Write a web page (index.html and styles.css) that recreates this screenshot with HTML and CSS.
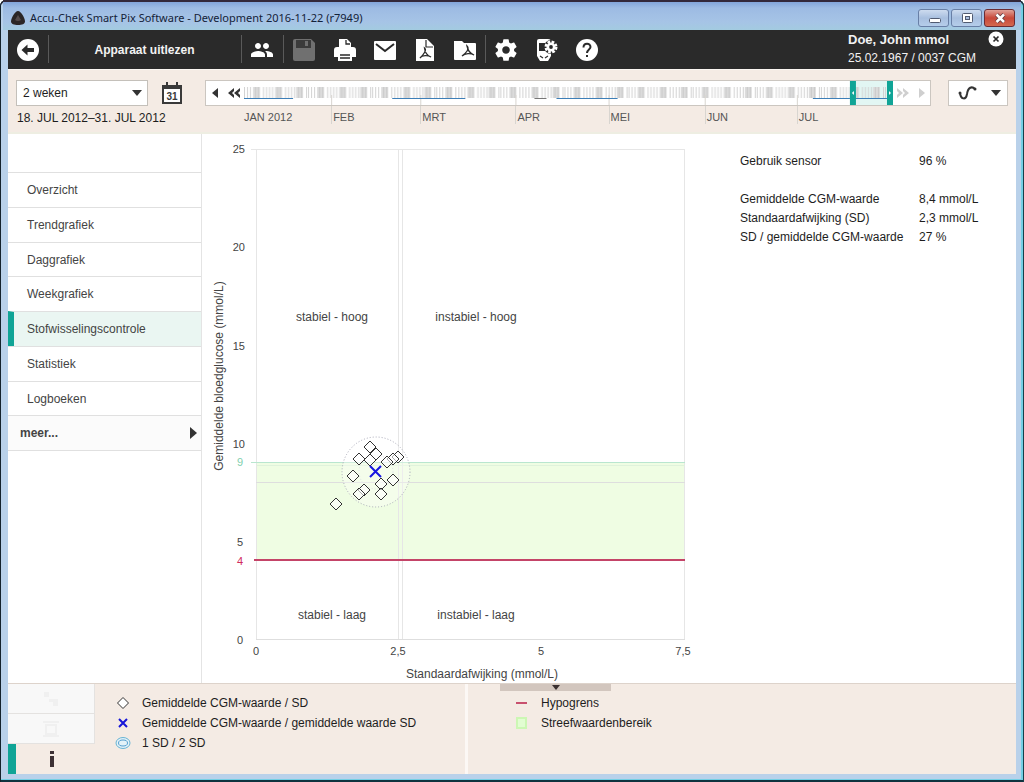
FILE: index.html
```html
<!DOCTYPE html>
<html lang="nl">
<head>
<meta charset="utf-8">
<meta name="viewport" content="width=device-width, initial-scale=1">
<title>Accu-Chek Smart Pix Software</title>
<link rel="stylesheet" href="styles.css">
</head>
<body>
<div class="window">
  <header class="titlebar">
    <svg class="app-icon" width="16" height="16" viewBox="0 0 16 16" aria-hidden="true"><path d="M8 1C11 1 15 8 15 11.500C15 14 12 15 8 15C4 15 1 14 1 11.500C1 8 5 1 8 1Z" fill="#2b2626"/><path d="M8 5L11 10Q8 12 5 10Z" fill="#554c4c"/></svg>
    <span class="title">Accu-Chek Smart Pix Software - Development 2016-11-22 (r7949)</span>
    <div class="window-buttons">
      <button class="win-btn" aria-label="Minimaliseren"><svg width="28" height="16" viewBox="0 0 28 16"><rect x="9.500" y="8.500" width="11" height="4" rx="1" fill="#fff" stroke="#505a70"/></svg></button>
      <button class="win-btn" aria-label="Maximaliseren"><svg width="28" height="16" viewBox="0 0 28 16"><rect x="9.500" y="3.500" width="10" height="9" rx="1" fill="#fff" stroke="#505a70"/><rect x="12.500" y="6.500" width="4" height="3" fill="#a9bddd" stroke="#505a70"/></svg></button>
      <button class="win-btn win-close" aria-label="Sluiten"><svg width="28" height="16" viewBox="0 0 28 16"><path d="M10.500 4.500L18 12M18 4.500L10.500 12" stroke="#5b3a40" stroke-width="4"/><path d="M10.500 4.500L18 12M18 4.500L10.500 12" stroke="#fff" stroke-width="2.500"/></svg></button>
    </div>
  </header>

  <nav class="toolbar" aria-label="Werkbalk">
    <button class="tool" aria-label="Terug"><svg width="24" height="24" viewBox="0 0 24 24"><circle cx="12" cy="12" r="11" fill="#fff"/><path d="M5.500 12L11.500 6.500V10H18V14H11.500V17.500Z" fill="#2a2a2a"/></svg></button>
    <button class="read-device">Apparaat uitlezen</button>
    <button class="tool sep-left" aria-label="Patiënten"><svg width="24" height="24" viewBox="0 0 24 24" fill="#fff"><path d="M16 11c1.660 0 2.990-1.340 2.990-3S17.660 5 16 5c-1.660 0-3 1.340-3 3s1.340 3 3 3zm-8 0c1.660 0 2.990-1.340 2.990-3S9.660 5 8 5C6.340 5 5 6.340 5 8s1.340 3 3 3zm0 2c-2.330 0-7 1.170-7 3.500V19h14v-2.500c0-2.330-4.670-3.500-7-3.500zm8 0c-.290 0-.620.020-.970.050 1.160.840 1.970 1.970 1.970 3.450V19h6v-2.500c0-2.330-4.670-3.500-7-3.500z"/></svg></button>
    <button class="tool sep-left" aria-label="Opslaan"><svg width="24" height="24" viewBox="0 0 24 24"><path d="M3 1H19L23 5V21Q23 23 21 23H3Q1 23 1 21V3Q1 1 3 1Z" fill="#707070"/><path d="M4 2H19V10H4Z" fill="#3b3b3b"/><path d="M13 3H16V8H13Z" fill="#707070"/></svg></button>
    <button class="tool" aria-label="Afdrukken"><svg width="24" height="24" viewBox="0 0 24 24"><path d="M6 1H14L18 5V9H20Q23 9 23 12V19H19V23H5V19H1V12Q1 9 4 9H6Z" fill="#fff"/><path d="M13 2V6H17M7 17H17M7 20H17" fill="none" stroke="#2a2a2a" stroke-width="1.300"/></svg></button>
    <button class="tool" aria-label="E-mail"><svg width="24" height="24" viewBox="0 0 24 24"><rect x="1" y="3" width="22" height="19" rx="1" fill="#fff"/><path d="M3 6L12 13L21 6" fill="none" stroke="#2a2a2a" stroke-width="2"/></svg></button>
    <button class="tool" aria-label="PDF"><svg width="24" height="24" viewBox="0 0 24 24"><path d="M3 1H14L21 8V23H3Z" fill="#fff"/><path d="M13 2V9H20" fill="none" stroke="#2a2a2a" stroke-width="1.200"/><path d="M11.500 10C14 12 11 16 7 20C9 17 15 17 18 19C15 18 12 15 11.500 10Z" fill="none" stroke="#2a2a2a" stroke-width="1.300"/></svg></button>
    <button class="tool" aria-label="PDF-map"><svg width="24" height="24" viewBox="0 0 24 24"><path d="M1 3H9L11 5H22Q23 5 23 6V21Q23 22 22 22H2Q1 22 1 21Z" fill="#fff"/><path d="M14 8C17 11 13 15 9 18C12 15 18 15 21 17C18 16 15 13 14 8Z" fill="none" stroke="#2a2a2a" stroke-width="1.300"/></svg></button>
    <button class="tool sep-left" aria-label="Instellingen"><svg width="26" height="26" viewBox="0 0 24 24" fill="#fff"><path d="M19.430 12.980c.040-.320.070-.640.070-.980s-.030-.660-.070-.980l2.110-1.650c.190-.150.240-.420.120-.640l-2-3.460c-.120-.220-.390-.300-.610-.220l-2.490 1c-.520-.400-1.080-.730-1.690-.980l-.380-2.650C14.460 2.180 14.250 2 14 2h-4c-.250 0-.460.180-.490.420l-.380 2.650c-.610.250-1.170.590-1.690.980l-2.490-1c-.230-.090-.490 0-.610.220l-2 3.460c-.130.220-.070.490.120.640l2.110 1.650c-.040.320-.070.650-.070.980s.030.660.070.980l-2.110 1.650c-.190.150-.240.420-.120.640l2 3.460c.120.220.390.300.610.220l2.490-1c.520.400 1.080.730 1.690.980l.380 2.650c.030.240.240.420.490.420h4c.250 0 .460-.180.490-.420l.380-2.650c.610-.250 1.170-.590 1.690-.980l2.490 1c.230.090.490 0 .610-.220l2-3.460c.120-.220.070-.490-.120-.640l-2.110-1.650zM12 15.500c-1.930 0-3.500-1.570-3.500-3.500s1.570-3.500 3.500-3.500 3.500 1.570 3.500 3.500-1.570 3.500-3.500 3.500z"/></svg></button>
    <button class="tool" aria-label="Apparaatinstellingen"><svg width="24" height="24" viewBox="0 0 24 24"><path d="M4 1H13Q16 1 16 4V18L13 23H5L2 18V3Q2 1 4 1Z" fill="#fff"/><path d="M4 5H14V13H4Z" fill="#2a2a2a"/><path d="M5 18L8 20M13 18L10 20" stroke="#2a2a2a" stroke-width="1.200"/><circle cx="16" cy="9" r="7" fill="#2a2a2a"/><circle cx="16" cy="9" r="4.500" fill="#fff"/><circle cx="16" cy="9" r="5.300" fill="none" stroke="#fff" stroke-width="2.400" stroke-dasharray="2.700 1.460"/><circle cx="16" cy="9" r="1.900" fill="#2a2a2a"/></svg></button>
    <button class="tool" aria-label="Help"><svg width="24" height="24" viewBox="0 0 24 24"><circle cx="12" cy="12" r="11" fill="#fff"/><path d="M8.500 9.500C8.500 4.500 15.500 4.500 15.500 9C15.500 11.500 12 11.500 12 15" fill="none" stroke="#2a2a2a" stroke-width="2"/><rect x="11" y="17" width="2" height="2" fill="#2a2a2a"/></svg></button>
    <div class="patient">
      <strong>Doe, John mmol</strong>
      <span>25.02.1967 / 0037 CGM</span>
    </div>
    <button class="patient-close" aria-label="Patiënt sluiten"><svg width="16" height="16" viewBox="0 0 16 16"><circle cx="8" cy="8" r="7.500" fill="#fff"/><path d="M5.500 5.500L10.500 10.500M10.500 5.500L5.500 10.500" stroke="#2a2a2a" stroke-width="1.700"/></svg></button>
  </nav>

  <section class="period">
    <div class="range">
      <div class="range-row">
        <div class="select-wrap">
          <select class="range-select" aria-label="Periode"><option>2 weken</option></select>
          <svg class="select-arrow" width="10" height="6" viewBox="0 0 10 6"><path d="M0 0H10L5 6Z" fill="#333"/></svg>
        </div>
        <button class="calendar" aria-label="Kalender"><svg width="20" height="22" viewBox="0 0 20 22"><path d="M1 4H19V21H1Z" fill="#fff" stroke="#3a3a3a" stroke-width="2"/><path d="M1 6H19M5 0V5M15 0V5" stroke="#3a3a3a" stroke-width="2"/><text x="10" y="18" class="cal-num">31</text></svg></button>
      </div>
      <span class="range-dates">18. JUL 2012–31. JUL 2012</span>
    </div>
    <div class="timeline">
      <div class="track">
        <button class="step" aria-label="Vorige"><svg width="6" height="10" viewBox="0 0 6 10"><path d="M6 0V10L0 5Z" fill="#333"/></svg></button>
        <button class="step" aria-label="Snel terug"><svg width="12" height="10" viewBox="0 0 12 10"><path d="M6 0L0 5L6 10V7L4 5L6 3ZM12 0L6 5L12 10V7L10 5L12 3Z" fill="#333"/></svg></button>
        <svg class="days" viewBox="0 0 649 26" preserveAspectRatio="none" aria-hidden="true">
          <defs>
            <pattern id="weeks" width="64" height="26" patternUnits="userSpaceOnUse">
              <path d="M1.500 7V18M4.500 7V18M7.500 7V18M20.500 7V18M23.500 7V18M26.500 7V18M29.500 7V18M42.500 7V18M45.500 7V18M48.500 7V18M51.500 7V18M63.500 7V18" stroke="#d2d2d2"/>
              <path d="M10 7H17V18H10ZM32 7H39V18H32ZM53 7H60V18H53Z" fill="#dcdcdc"/>
              <path d="M12.500 7V18M15.500 7V18M34.500 7V18M37.500 7V18M55.500 7V18M58.500 7V18" stroke="#cacaca"/>
            </pattern>
          </defs>
          <rect width="606" height="26" fill="url(#weeks)"/>
          <path d="M88.500 15V26M177.500 15V26M272.500 15V26M365.500 15V26M461.500 15V26M553.500 15V26" stroke="#d8d5d0"/>
          <path d="M1 18.500H50M149 18.500H222M313 18.500H374M569 18.500H606" stroke="#3d7fb8"/>
          <path d="M291 18.500H303" stroke="#777"/>
          <rect x="611" y="0" width="32" height="26" fill="#e2f6f3"/>
          <rect x="611" y="0" width="32" height="26" fill="url(#weeks)"/>
          <path d="M611 18.500H643" stroke="#3d7fb8"/>
          <path d="M606 0.500H649M606 25.500H649" stroke="#10a496"/>
          <path d="M606 0H612V26H606ZM643 0H649V26H643Z" fill="#10a496"/>
          <path d="M610 11V15L608 13ZM645 11V15L647 13Z" fill="#fff"/>
        </svg>
        <button class="step" aria-label="Snel vooruit"><svg width="12" height="10" viewBox="0 0 12 10"><path d="M0 0L6 5L0 10V7L2 5L0 3ZM6 0L12 5L6 10V7L8 5L6 3Z" fill="#cfcfcf"/></svg></button>
        <button class="step" aria-label="Volgende"><svg width="6" height="10" viewBox="0 0 6 10"><path d="M0 0V10L6 5Z" fill="#cfcfcf"/></svg></button>
      </div>
      <div class="months"><span>JAN 2012</span><span>FEB</span><span>MRT</span><span>APR</span><span>MEI</span><span>JUN</span><span>JUL</span></div>
    </div>
    <button class="curve" aria-label="Curvetype"><svg width="20" height="16" viewBox="0 0 20 16"><path d="M2 8C3 15 8 15 9 9C10 2 14 1 17 4" fill="none" stroke="#333" stroke-width="2"/><circle cx="2" cy="8" r="1.500" fill="#333"/><circle cx="17" cy="4" r="1.500" fill="#333"/></svg><svg width="10" height="6" viewBox="0 0 10 6"><path d="M0 0H10L5 6Z" fill="#333"/></svg></button>
  </section>

  <main class="content">
    <nav class="sidebar" aria-label="Rapporten">
      <a class="item" href="#">Overzicht</a>
      <a class="item" href="#">Trendgrafiek</a>
      <a class="item" href="#">Daggrafiek</a>
      <a class="item" href="#">Weekgrafiek</a>
      <a class="item active" href="#" aria-current="page">Stofwisselingscontrole</a>
      <a class="item" href="#">Statistiek</a>
      <a class="item" href="#">Logboeken</a>
      <a class="item more" href="#">meer...<svg width="7" height="12" viewBox="0 0 7 12"><path d="M0 0V12L7 6Z" fill="#333"/></svg></a>
    </nav>

    <div class="chart">
      <svg viewBox="0 0 500 549" role="img" aria-label="Stofwisselingscontrole">
        <defs><path id="pt" d="M0 -6L6 0L0 6L-6 0Z" fill="#fff" fill-opacity="0.600" stroke="#333"/></defs>
        <rect x="54" y="328" width="429" height="98" fill="#effde3"/>
        <path d="M49 15.500H483M54.500 15V506M482.500 15V506M196.500 15V506M200.500 15V506" class="grid"/>
        <path d="M54 348.500H483M54 505.500H483" stroke="#dedede"/>
        <path d="M49 328.500H483" stroke="#b9e6cf"/>
        <path d="M54 331.500H483" stroke="#e0f2dc"/>
        <path d="M52 426H483" stroke="#c44468" stroke-width="2"/>
        <ellipse cx="174" cy="338" rx="34" ry="35" fill="#fff" fill-opacity="0.300" stroke="#a9a9b8" stroke-dasharray="1 2"/>
        <ellipse cx="174" cy="338" rx="17" ry="17" fill="none" stroke="#dde2e6" stroke-dasharray="1 2"/>
        <use href="#pt" x="168" y="326"/><use href="#pt" x="174" y="320"/><use href="#pt" x="168" y="313"/><use href="#pt" x="157" y="325"/>
        <use href="#pt" x="196" y="323"/><use href="#pt" x="191" y="325"/><use href="#pt" x="185" y="328"/>
        <use href="#pt" x="151" y="342"/><use href="#pt" x="191" y="346"/><use href="#pt" x="179" y="350"/><use href="#pt" x="179" y="360"/>
        <use href="#pt" x="162" y="356"/><use href="#pt" x="157" y="360"/><use href="#pt" x="134" y="370"/>
        <path d="M168 332L179 343M179 332L168 343" stroke="#1616e0" stroke-width="2"/>
        <g class="ticks-y"><text x="43" y="19">25</text><text x="43" y="117">20</text><text x="43" y="216">15</text><text x="43" y="314">10</text><text x="41" y="412">5</text><text x="41" y="510">0</text><text x="41" y="332" class="high">9</text><text x="41" y="431" class="low">4</text></g>
        <g class="mid ticks-x"><text x="54" y="521">0</text><text x="196" y="521">2,5</text><text x="339" y="521">5</text><text x="481" y="521">7,5</text></g>
        <g class="mid zone"><text x="130" y="187">stabiel - hoog</text><text x="274" y="187">instabiel - hoog</text><text x="130" y="485">stabiel - laag</text><text x="274" y="485">instabiel - laag</text><text x="280" y="544">Standaardafwijking (mmol/L)</text><text transform="translate(21 242) rotate(-90)">Gemiddelde bloedglucose (mmol/L)</text></g>
      </svg>
    </div>

    <dl class="stats">
      <dt>Gebruik sensor</dt><dd>96 %</dd>
      <dt class="gap">Gemiddelde CGM-waarde</dt><dd class="gap">8,4 mmol/L</dd>
      <dt>Standaardafwijking (SD)</dt><dd>2,3 mmol/L</dd>
      <dt>SD / gemiddelde CGM-waarde</dt><dd>27 %</dd>
    </dl>
  </main>

  <footer class="legend">
    <div class="legend-tabs">
      <button class="tab" disabled aria-label="Curve"><svg width="20" height="20" viewBox="0 0 20 20"><path d="M3 3H8V8H3ZM8 10H17V13H8ZM12 13H17V17H12Z" fill="#f0f0f0"/></svg></button>
      <button class="tab" disabled aria-label="Tabel"><svg width="20" height="20" viewBox="0 0 20 20"><path d="M2 3H18M2 17H18M5 6H15V15H5Z" fill="none" stroke="#f0f0f0" stroke-width="2"/></svg></button>
      <button class="tab info" aria-label="Informatie"><svg width="6" height="16" viewBox="0 0 6 16"><path d="M1 0H5V3H1ZM1 5H5V16H1Z" fill="#3c3034"/></svg></button>
    </div>
    <ul class="legend-list">
      <li><svg width="16" height="14" viewBox="0 0 16 14"><path d="M8 1.500L13.500 7L8 12.500L2.500 7Z" fill="#fff" stroke="#333"/></svg>Gemiddelde CGM-waarde / SD</li>
      <li><svg width="16" height="14" viewBox="0 0 16 14"><path d="M4 3L12 11M12 3L4 11" stroke="#1616d8" stroke-width="2"/></svg>Gemiddelde CGM-waarde / gemiddelde waarde SD</li>
      <li><svg width="16" height="14" viewBox="0 0 16 14"><ellipse cx="8" cy="7" rx="7" ry="5.500" fill="#e3f2f8" stroke="#69b4d4"/><ellipse cx="8" cy="7" rx="4.500" ry="3" fill="#e3f2f8" stroke="#549fd0"/></svg>1 SD / 2 SD</li>
    </ul>
    <div class="legend-right">
      <button class="collapse" aria-label="Legenda inklappen"><svg width="8" height="5" viewBox="0 0 8 5"><path d="M0 0H8L4 5Z" fill="#3a3030"/></svg></button>
      <ul class="legend-list">
        <li><svg width="16" height="14" viewBox="0 0 16 14"><path d="M2 7H13" stroke="#c8506e" stroke-width="2"/></svg>Hypogrens</li>
        <li><svg width="16" height="14" viewBox="0 0 16 14"><rect x="2" y="1" width="11" height="12" fill="#ccf7b4"/><rect x="4" y="3" width="7" height="8" fill="#e2fdd2"/></svg>Streefwaardenbereik</li>
      </ul>
    </div>
  </footer>
</div>
</body>
</html>
```
FILE: styles.css
```css
* { box-sizing: border-box; }

body {
  margin: 0;
  font: 12px/16px "Liberation Sans", Arial, sans-serif;
  color: #2c2c2c;
}

button {
  margin: 0;
  padding: 0;
  border: 0;
  background: none;
  color: inherit;
  font: inherit;
  display: flex;
  align-items: center;
  justify-content: center;
}

.window {
  min-height: 100vh;
  display: flex;
  flex-direction: column;
  padding: 0 8px 8px;
  border-radius: 6px 6px 0 0;
  background: #b9d1ea;
  box-shadow: inset 1px 0 #14222c, inset -1px 0 #14404a, inset 0 2px #33283a, inset 0 -2px #10333f, inset -3px 0 #74cfe4, inset 0 -3px #74cfe4;
}

/* Title bar */
.titlebar {
  height: 30px;
  margin: 0 -5px;
  padding: 6px 5px 0;
  display: flex;
  align-items: center;
  background: linear-gradient(#33283a 2px, #83a5da 2px, #9dbbe3 8px, #a6c4e6 22px, #a3cbe0 30px);
}
.app-icon { margin: 0 4px 0 2px; }
.title {
  flex: 1;
  font: 11px/16px "Noto Sans", "Open Sans", sans-serif;
  color: #142238;
  white-space: nowrap;
}
.window-buttons { display: flex; gap: 2px; padding-right: 1px; }
.win-btn {
  width: 31px;
  height: 18px;
  border: 1px solid #687fa6;
  border-radius: 3px;
  background: linear-gradient(#cddbef, #a8bfdf 50%, #b5cdea);
}
.win-close {
  border-color: #6b2c34;
  background: linear-gradient(#e0a198, #c8483a 50%, #d4694f);
}

/* Toolbar */
.toolbar {
  height: 39px;
  display: flex;
  background: #2a2a2a;
  color: #f2f2f2;
}
.tool { width: 40px; height: 39px; }
.sep-left { width: 42px; position: relative; }
.sep-left::before, .read-device::before {
  content: "";
  position: absolute;
  left: 0;
  top: 5px;
  bottom: 6px;
  width: 1px;
  background: #5a5a5a;
}
.read-device { position: relative; width: 193px; font-weight: bold; }
.patient {
  margin-left: auto;
  width: 140px;
  padding-top: 1px;
  display: flex;
  flex-direction: column;
  line-height: 18px;
  white-space: nowrap;
}
.patient strong { font-size: 13px; }
.patient-close { align-self: flex-start; margin: 1px 12px 0 0; }

/* Period selection */
.period {
  height: 65px;
  padding: 10px 8px 0;
  display: flex;
  background: #f4ebe4;
  border-top: 1px solid #fbf6f2;
  border-bottom: 2px solid #eeeee2;
}
.range { width: 189px; }
.range-row { display: flex; align-items: center; gap: 14px; }
.select-wrap { position: relative; }
.range-select {
  display: block;
  appearance: none;
  width: 132px;
  height: 26px;
  padding: 0 6px;
  border: 1px solid #c4c0ba;
  border-radius: 0;
  background: #fff;
  font: inherit;
  color: #1d1d1d;
}
.select-arrow { position: absolute; right: 6px; top: 10px; pointer-events: none; }
.cal-num { font-size: 10px; font-weight: bold; text-anchor: middle; fill: #3a3a3a; }
.range-dates { display: block; padding: 4px 1px 0; color: #1d1d1d; white-space: nowrap; }
.timeline { flex: 1; min-width: 0; }
.track {
  display: flex;
  height: 26px;
  background: #fff;
  outline: 1px solid #cbc6c0;
  outline-offset: -1px;
}
.step { width: 19px; height: 26px; }
.days { flex: 1; min-width: 0; height: 26px; }
.months {
  display: grid;
  grid-template-columns: 88fr 89fr 95fr 93fr 96fr 92fr 134fr;
  padding-left: 38px;
  font-size: 11px;
  color: #555;
}
.months span { border-left: 1px solid #d8d5d0; padding: 4px 0 0 1px; line-height: 14px; }
.months span:first-child { border-color: transparent; padding-left: 0; }
.curve {
  width: 60px;
  height: 26px;
  margin-left: 17px;
  gap: 13px;
  padding-left: 2px;
  border: 1px solid #cbc6c0;
  background: #fff;
}

/* Content */
.content { flex: 1; display: flex; background: #fff; }
.sidebar {
  width: 194px;
  padding-top: 38px;
  border-right: 1px solid #e4e4e4;
}
.item {
  display: flex;
  align-items: center;
  height: 35px;
  padding-left: 19px;
  border-top: 1px solid #e0e0e0;
  color: #444;
  text-decoration: none;
}
.item:nth-child(4n - 1) { height: 34px; }
.active { padding-left: 13px; border-left: 6px solid #10a496; background: #eaf6f2; }
.more {
  justify-content: space-between;
  padding: 0 4px 0 12px;
  border-bottom: 1px solid #e0e0e0;
  background: #fbfbfb;
  font-weight: bold;
}
.item.more { height: 36px; }
.chart { flex: 1; min-width: 0; }
.chart svg { display: block; width: 100%; height: auto; }
.grid { stroke: #e6e6e6; fill: none; }
.chart text { fill: #444; font-size: 12px; }
.chart .ticks-y text, .chart .ticks-x text { font-size: 11px; }
.ticks-y { text-anchor: end; }
.mid { text-anchor: middle; }
.chart .ticks-y .high { fill: #7fcfae; }
.chart .ticks-y .low { fill: #d02c5c; }
.stats {
  width: 314px;
  margin: 0;
  padding: 18px 0 0 38px;
  display: grid;
  grid-template-columns: 179px 1fr;
  align-content: start;
  line-height: 19px;
  color: #1d1d1d;
  white-space: nowrap;
}
.stats dd { margin: 0; }
.gap { padding-top: 19px; }

/* Legend */
.legend {
  height: 91px;
  display: flex;
  background: #f4ebe4;
  border-top: 1px solid #ddd3cb;
  color: #1d1d1d;
}
.legend-tabs { width: 87px; }
.tab {
  width: 100%;
  height: 30px;
  border: 1px solid #e4e2e0;
  border-width: 0 1px 1px 0;
  background: #f8f8f8;
}
.info { border: 0; border-left: 8px solid #10a496; background: none; padding-right: 8px; }
.legend-list {
  flex: 1;
  margin: 0;
  padding: 9px 0 0 20px;
  list-style: none;
  line-height: 20px;
}
.legend-list li { display: flex; align-items: center; gap: 11px; white-space: nowrap; }
.legend > .legend-list { flex: 0 0 373px; border-right: 3px solid #fcf8f5; }
.legend-right { flex: 1; }
.legend-right .legend-list { padding: 2px 0 0 46px; }
.collapse {
  width: 111px;
  height: 7px;
  margin-left: 32px;
  background: #d2c6be;
}
```
